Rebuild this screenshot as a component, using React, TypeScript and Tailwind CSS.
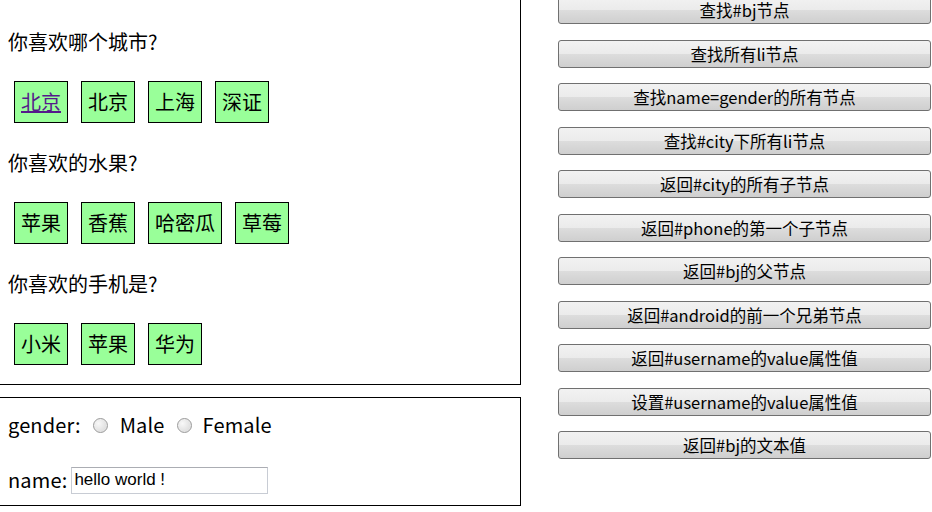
import React from "react";

const font = { fontFamily: '"Noto Sans CJK SC", "Noto Sans", sans-serif' };

const sections = [
  { title: "你喜欢哪个城市?", items: ["北京", "北京", "上海", "深证"], link: 0 },
  { title: "你喜欢的水果?", items: ["苹果", "香蕉", "哈密瓜", "草莓"], link: -1 },
  { title: "你喜欢的手机是?", items: ["小米", "苹果", "华为"], link: -1 },
];

const buttons = [
  "查找#bj节点",
  "查找所有li节点",
  "查找name=gender的所有节点",
  "查找#city下所有li节点",
  "返回#city的所有子节点",
  "返回#phone的第一个子节点",
  "返回#bj的父节点",
  "返回#android的前一个兄弟节点",
  "返回#username的value属性值",
  "设置#username的value属性值",
  "返回#bj的文本值",
];

function Radio() {
  return (
    <span className="inline-block h-[15px] w-[15px] rounded-full border border-[#9a9a9a] bg-[radial-gradient(circle_at_35%_35%,#f8f8f8,#d4d4d4)] shadow-[inset_0_0_1px_#fff]" />
  );
}

export default function App() {
  return (
    <div className="flex h-[512px] w-[932px] items-start overflow-hidden bg-white text-black" style={font}>
      <div className="flex w-[521px] shrink-0 flex-col">
        <div className="flex flex-col border-b border-r border-black pb-[19px] pl-[8px] pt-[30px]">
          {sections.map((s, i) => (
            <div key={i} className={i === 0 ? "flex flex-col" : "mt-[28px] flex flex-col"}>
              <p className="text-[20px] leading-[24px]">{s.title}</p>
              <ul className="mt-[27px] flex gap-[13px] pl-[6px]">
                {s.items.map((it, j) => (
                  <li key={j} className="h-[42px] border border-black bg-[#99ff99] px-[6px] text-[20px] leading-[40px]">
                    {j === s.link ? <a href="#" className="text-[#551a8b] underline">{it}</a> : it}
                  </li>
                ))}
              </ul>
            </div>
          ))}
        </div>
        <div className="mt-[12px] flex h-[109px] flex-col border-y border-r border-black pl-[8px] pt-[13px]">
          <div className="flex h-[28px] items-center text-[20px] tracking-[0.15px]">
            <span>gender:</span>
            <span className="ml-[12px] mr-[12px] flex"><Radio /></span>
            <span>Male</span>
            <span className="ml-[12px] mr-[11px] flex"><Radio /></span>
            <span>Female</span>
          </div>
          <div className="mt-[27px] flex h-[28px] items-center text-[20px] tracking-[0.15px]">
            <span>name:</span>
            <input
              readOnly
              value="hello world !"
              className="ml-[4px] h-[27px] w-[197px] border border-[#c8ccd4] border-t-[#abadb3] px-[2px] text-[17px] tracking-normal text-black outline-none"
              style={{ fontFamily: '"Liberation Sans", Arial, sans-serif' }}
            />
          </div>
        </div>
      </div>
      <div className="ml-[37px] mt-[-4px] flex w-[373px] shrink-0 flex-col gap-[15.5px]">
        {buttons.map((b, i) => (
          <button
            key={i}
            className="h-[28px] w-full rounded-[3px] border border-[#707070] bg-[linear-gradient(#f2f2f2_0%,#ebebeb_50%,#dddddd_50%,#cfcfcf_100%)] text-[16.5px] leading-[26px] text-black"
          >
            {b}
          </button>
        ))}
      </div>
    </div>
  );
}
